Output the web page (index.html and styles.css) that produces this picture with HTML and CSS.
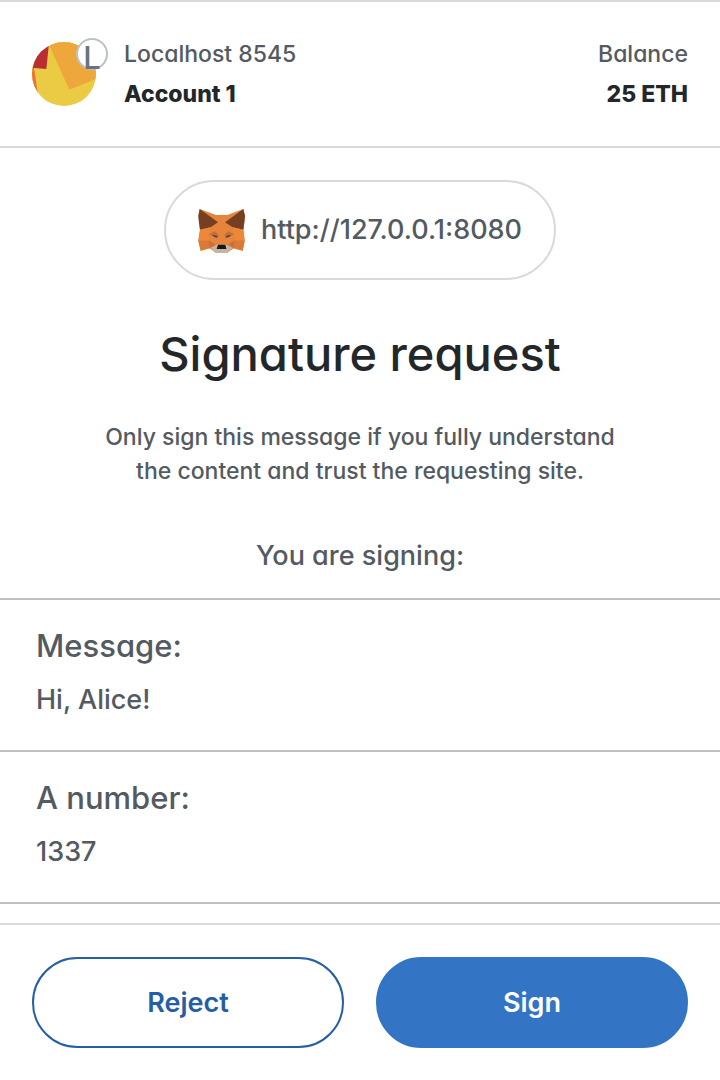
FILE: index.html
```html
<!DOCTYPE html>
<html lang="en">
<head>
<meta charset="utf-8">
<meta name="viewport" content="width=device-width, initial-scale=1">
<title>Signature request</title>
<link rel="stylesheet" href="styles.css">
</head>
<body>
<div class="page">
  <header class="header">
    <div class="account">
      <div class="avatar">
        <svg class="avatar-image" viewBox="36 36 192 192" aria-hidden="true">
          <defs><clipPath id="round"><circle cx="132" cy="132" r="96"/></clipPath></defs>
          <g clip-path="url(#round)">
            <rect x="36" y="36" width="192" height="192" fill="#eacb43"/>
            <path d="M90 30H240V142L148 179L86 42Z" fill="#eea73b"/>
            <path d="M30 30H88L79 117L30 113Z" fill="#b92d33"/>
            <path d="M30 113L42 114L54 194L30 194Z" fill="#eb7330"/>
          </g>
        </svg>
        <span class="network-badge">L</span>
      </div>
      <div class="header-text">
        <span class="label">Localhost 8545</span>
        <strong class="value">Account 1</strong>
      </div>
    </div>
    <div class="header-text balance">
      <span class="label">Balance</span>
      <strong class="value">25 ETH</strong>
    </div>
  </header>

  <main class="content">
    <div class="origin">
      <svg class="fox" viewBox="30 36 141 135" aria-hidden="true">
        <path d="M35 39L84 57H118L166 39L171 60L166 101L170 134L164 164L137 157L117 171H84L65 157L38 164L31 134L36 101L31 60Z" fill="#e5843a"/>
        <path d="M35 39L90 79L68 94L36 101L33 80L31 60ZM166 39L111 79L134 94L166 101L169 80L171 60Z" fill="#754022"/>
        <path d="M36 101L68 94L62 133L31 134ZM166 101L134 94L140 133L170 134Z" fill="#ec8838"/>
        <path d="M31 134H62L65 157L38 164ZM170 134H140L137 157L164 164Z" fill="#db7a37"/>
        <path d="M62 133L85 148L65 157ZM140 133L117 148L137 157Z" fill="#cc6f38"/>
        <path d="M62 115L82 106L93 118L89 125ZM140 115L120 106L109 118L113 125Z" fill="#cc6c32"/>
        <path d="M72 117L86 119L89 125L79 123ZM130 117L116 119L113 125L123 123Z" fill="#33445a"/>
        <path d="M68 155L85 146L117 146L134 155L117 171H84Z" fill="#c6b5a4"/>
        <path d="M90 146H112L115 159H86Z" fill="#171717"/>
      </svg>
      <span>http://127.0.0.1:8080</span>
    </div>
    <h1 class="title">Signature request</h1>
    <p class="notice">Only sign this message if you fully understand the content and trust the requesting site.</p>
    <h2 class="subtitle">You are signing:</h2>
    <dl class="fields">
      <div class="field">
        <dt class="field-name">Message:</dt>
        <dd class="field-value">Hi, Alice!</dd>
      </div>
      <div class="field">
        <dt class="field-name">A number:</dt>
        <dd class="field-value">1337</dd>
      </div>
    </dl>
  </main>

  <footer class="footer">
    <button class="button button-secondary" type="button">Reject</button>
    <button class="button button-primary" type="button">Sign</button>
  </footer>
</div>
</body>
</html>
```
FILE: styles.css
```css
* {
  box-sizing: border-box;
}

body {
  margin: 0;
  background: #fff;
  color: #535a61;
  font-family: Inter, "Liberation Sans", sans-serif;
  font-feature-settings: "cv11";
  font-size: 23px;
  font-weight: 450;
}

.page {
  display: flex;
  flex-direction: column;
  min-height: 100vh;
}

.header {
  display: flex;
  justify-content: space-between;
  padding: 32px;
  border-top: 2px solid #d8d9de;
  border-bottom: 2px solid #d8d9de;
}

.account {
  display: flex;
  align-items: center;
  gap: 28px;
}

.avatar {
  position: relative;
  width: 64px;
  height: 64px;
}

.avatar-image {
  display: block;
  width: 100%;
}

.network-badge {
  position: absolute;
  top: -4px;
  right: -12px;
  width: 32px;
  height: 32px;
  border: 2px solid #bbc0c5;
  border-radius: 50%;
  background: #fff;
  color: #6a737d;
  font-size: 31px;
  line-height: 36px;
  text-align: center;
}

.header-text {
  display: flex;
  flex-direction: column;
  line-height: 40px;
}

.balance {
  text-align: right;
}

.value {
  color: #24272a;
  font-weight: 800;
}

.content {
  display: flex;
  flex: 1;
  flex-direction: column;
  align-items: center;
  padding-top: 32px;
}

.origin {
  display: flex;
  align-items: center;
  gap: 16px;
  padding: 24px 32px;
  border: 2px solid #d8d9de;
  border-radius: 50px;
  font-size: 27px;
  line-height: 48px;
}

.fox {
  width: 47px;
  height: 45px;
}

.title {
  margin: 40px 0 0;
  color: #24272a;
  font-size: 47px;
  font-weight: 500;
  line-height: 68px;
}

.notice {
  max-width: 532px;
  margin: 32px 0 0;
  line-height: 34px;
  text-align: center;
}

.subtitle {
  margin: 48px 0 0;
  font-size: 27px;
  font-weight: 450;
  line-height: 40px;
}

.fields {
  align-self: stretch;
  margin: 22px 0 0;
  border-top: 2px solid #bbc0c5;
}

.field {
  padding: 24px 36px 30px;
  border-bottom: 2px solid #bbc0c5;
}

.field-name {
  font-size: 31px;
  line-height: 44px;
}

.field-value {
  margin: 12px 0 0;
  font-size: 27px;
  line-height: 40px;
}

.footer {
  display: grid;
  grid-template-columns: 1fr 1fr;
  gap: 32px;
  padding: 32px;
  border-top: 2px solid #d8d9de;
}

.button {
  padding: 24px;
  border: 2px solid #245fa5;
  border-radius: 46px;
  font: inherit;
  font-size: 27px;
  font-weight: 600;
  line-height: 39px;
}

.button-secondary {
  background: #fff;
  color: #245fa5;
}

.button-primary {
  border-color: #3374c4;
  background: #3374c4;
  color: #fff;
}
```
